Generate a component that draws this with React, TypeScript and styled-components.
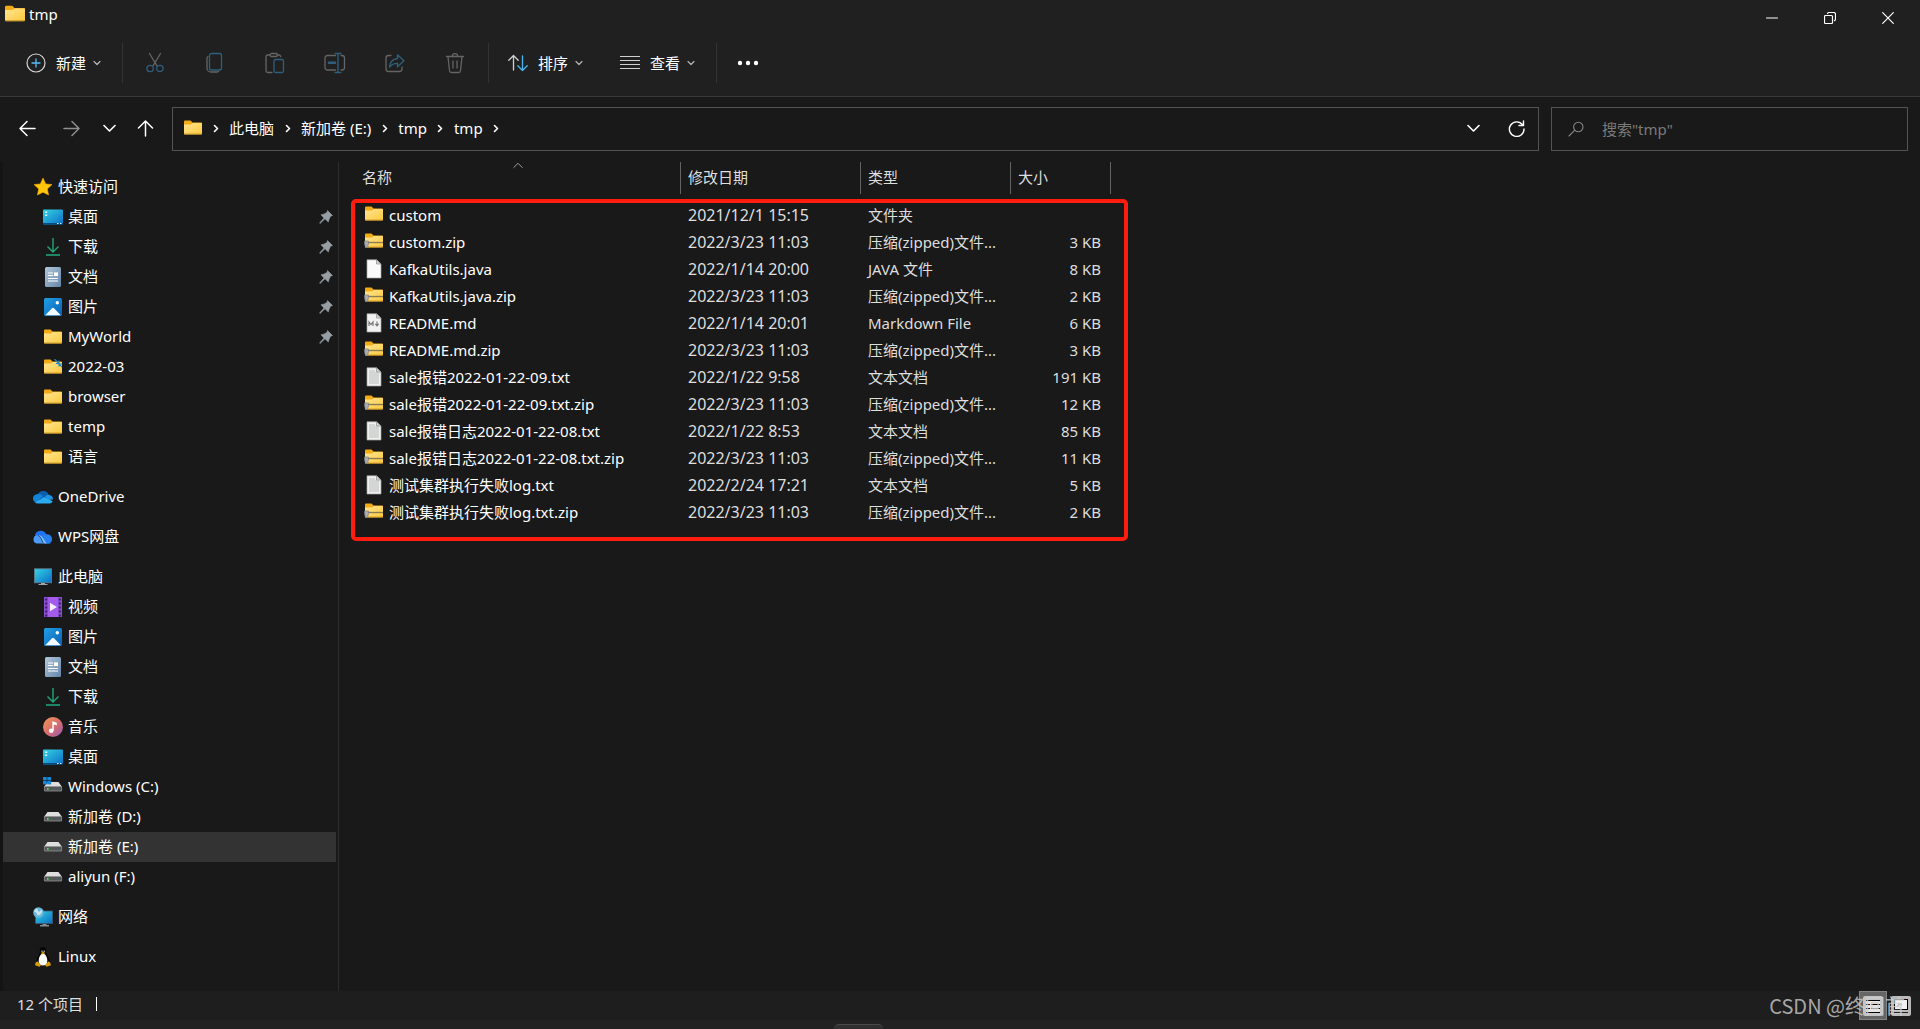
import React from "react";
import styled, { createGlobalStyle } from "styled-components";

const GlobalStyle = createGlobalStyle`
  * { box-sizing: border-box; }
  body {
    margin: 0;
    background: #191919;
    color: #ffffff;
    font-family: "Noto Sans", "Noto Sans CJK SC", sans-serif;
    font-size: 15px;
    line-height: 20px;
  }
  button, input { font: inherit; color: inherit; }
`;

const Window = styled.div`
  display: flex;
  flex-direction: column;
  min-height: 100vh;
`;

const PlainButton = styled.button`
  display: inline-flex;
  align-items: center;
  justify-content: center;
  padding: 0;
  border: 0;
  background: transparent;
  white-space: nowrap;
`;

/* ---------- title bar and toolbar ---------- */

const Header = styled.header`
  background: #202020;
  border-bottom: 1px solid #393939;
`;

const TitleBar = styled.div`
  display: flex;
  justify-content: space-between;
  height: 36px;
  padding: 0 3px 0 5px;
`;

const Title = styled.h1`
  display: flex;
  align-items: center;
  gap: 4px;
  height: 28px;
  margin: 0;
  font-size: 15px;
  font-weight: 400;
`;

const WindowControls = styled.div`
  display: flex;
`;

const WindowButton = styled(PlainButton)`
  width: 58px;
  height: 36px;
`;

const Toolbar = styled.div`
  display: flex;
  align-items: center;
  height: 60px;
  padding: 0 0 6px 16px;
`;

const MenuButton = styled(PlainButton)`
  height: 40px;
  padding: 0 10px;
`;

const MenuLabel = styled.span`
  margin: 0 7px 0 10px;
`;

const IconButton = styled(PlainButton)`
  width: 60px;
  height: 40px;
`;

const MoreButton = styled(PlainButton)`
  width: 62px;
  height: 40px;
`;

const Separator = styled.span<{ $before: number; $after: number }>`
  width: 1px;
  height: 40px;
  margin-left: ${(p) => p.$before}px;
  margin-right: ${(p) => p.$after}px;
  background: #333333;
`;

const MenuGroup = styled.div`
  display: flex;
  gap: 17px;
`;

/* ---------- address row ---------- */

const AddressRow = styled.div`
  display: flex;
  align-items: center;
  padding: 10px 12px 11px 5px;
`;

const NavButtons = styled.div`
  display: flex;
  width: 167px;
  padding-bottom: 2px;
`;

const NavButton = styled(PlainButton)<{ $width: number }>`
  width: ${(p) => p.$width}px;
  height: 40px;
`;

const AddressBox = styled.div`
  display: flex;
  flex: 1;
  align-items: center;
  justify-content: space-between;
  height: 44px;
  padding: 0 0 2px 11px;
  border: 1px solid #535353;
`;

const Crumbs = styled.nav`
  display: flex;
  align-items: center;
`;

const Crumb = styled(PlainButton)`
  height: 40px;
`;

const CrumbArrow = styled.span`
  display: inline-flex;
  justify-content: center;
  width: 27px;
`;

const AddressActions = styled.div`
  display: flex;
`;

const AddressAction = styled(PlainButton)`
  width: 43px;
  height: 40px;
`;

const SearchBox = styled.label`
  display: flex;
  align-items: center;
  gap: 17px;
  width: 357px;
  height: 44px;
  margin-left: 12px;
  padding: 0 16px;
  border: 1px solid #535353;
`;

const SearchInput = styled.input`
  flex: 1;
  min-width: 0;
  padding: 0;
  border: 0;
  outline: 0;
  background: transparent;
  &::placeholder { color: #7a7a7a; opacity: 1; }
`;

/* ---------- body ---------- */

const Body = styled.div`
  display: flex;
  flex: 1;
`;

const Sidebar = styled.nav`
  display: flex;
  flex-direction: column;
  gap: 10px;
  width: 339px;
  padding-top: 10px;
  border-left: 3px solid #141414;
  border-right: 1px solid #2d2d2d;
`;

const TreeGroup = styled.ul`
  margin: 0;
  padding: 0;
  list-style: none;
`;

const TreeButton = styled(PlainButton)<{ $nested: boolean; $selected: boolean }>`
  display: flex;
  justify-content: flex-start;
  gap: 5px;
  width: 333px;
  height: 30px;
  padding: 0 3px 0 ${(p) => (p.$nested ? 40 : 30)}px;
  background: ${(p) => (p.$selected ? "#333333" : "transparent")};
`;

const IconSlot = styled.span`
  display: inline-flex;
  flex: none;
  align-items: center;
  justify-content: center;
  width: 20px;
  height: 20px;
`;

const TreeLabel = styled.span`
  flex: 1;
  padding-bottom: 2px;
  text-align: left;
`;

const Main = styled.main`
  flex: 1;
  padding-left: 16px;
`;

const Listing = styled.div`
  position: relative;
  width: 756px;
`;

const FileTable = styled.table`
  width: 756px;
  border-collapse: separate;
  border-spacing: 0;
  table-layout: fixed;
`;

const HeadCell = styled.th<{ $width: number }>`
  position: relative;
  width: ${(p) => p.$width}px;
  height: 32px;
  padding: 0 7px 2px;
  border-right: 1px solid #636363;
  color: #dedede;
  font-weight: 400;
  text-align: left;
`;

const SortMark = styled.span`
  position: absolute;
  top: 0;
  left: 50%;
  display: flex;
  margin-left: -5px;
`;

const Spacer = styled.td`
  height: 8px;
  padding: 0;
`;

const Cell = styled.td<{ $align?: "left" | "right" }>`
  height: 27px;
  padding: 0 ${(p) => (p.$align === "right" ? 10 : 7)}px 2px 7px;
  overflow: hidden;
  color: #dedede;
  text-align: ${(p) => p.$align ?? "left"};
  white-space: nowrap;
`;

const DateCell = styled(Cell)`
  font-size: 16px;
`;

const FileName = styled.span`
  display: flex;
  align-items: center;
  gap: 5px;
  padding-left: 2px;
  color: #ffffff;
`;

const Highlight = styled.div`
  position: absolute;
  top: 37px;
  right: -17px;
  bottom: -15px;
  left: -4px;
  border: 4px solid #ff1d0f;
  border-radius: 5px;
  pointer-events: none;
`;

/* ---------- status bar ---------- */

const StatusBar = styled.footer`
  position: relative;
  display: flex;
  align-items: center;
  justify-content: space-between;
  height: 29px;
  padding: 0 5px 0 17px;
  background: #1e1e1e;
  color: #dedede;
`;

const StatusText = styled.span`
  display: flex;
  align-items: center;
  gap: 13px;
  padding-bottom: 3px;
`;

const StatusRule = styled.span`
  width: 1px;
  height: 14px;
  background: #ffffff;
`;

const ViewButtons = styled.div`
  display: flex;
`;

const ViewButton = styled(PlainButton)<{ $active: boolean }>`
  width: 28px;
  height: 29px;
  border: 1px solid ${(p) => (p.$active ? "#838383" : "transparent")};
  background: ${(p) => (p.$active ? "#666666" : "transparent")};
`;

const Watermark = styled.span`
  position: absolute;
  right: 15px;
  bottom: 0;
  color: rgba(205, 205, 205, 0.8);
  font-family: "Noto Sans CJK SC", sans-serif;
  font-size: 20px;
  line-height: 28px;
  pointer-events: none;
`;

const BottomEdge = styled.div`
  display: flex;
  align-items: flex-end;
  justify-content: center;
  height: 9px;
  padding-right: 203px;
  background: #222222;
`;

const EdgeTab = styled.span`
  width: 49px;
  height: 5px;
  border-top: 1px solid #4a4a4a;
  border-radius: 5px 5px 0 0;
  background: #303030;
`;

/* ---------- icons ---------- */

type Line = { d: string; w: number; h: number; color?: string; weight?: number };
const Stroke = ({ d, w, h, color = "#ffffff", weight = 1 }: Line) => (
  <svg width={w} height={h} viewBox={`0 0 ${w} ${h}`} fill="none" stroke={color} strokeWidth={weight} strokeLinecap="round" strokeLinejoin="round" aria-hidden="true">
    <path d={d} />
  </svg>
);

const SmallChevron = () => <Stroke d="M1 1.5 4 4.5 7 1.5" w={8} h={6} color="#b5b5b5" weight={1.2} />;
const Chevron = () => <Stroke d="M1 1.5 6.500 7 12 1.500" w={13} h={9} weight={1.6} />;
const RightChevron = () => <Stroke d="M1.500 1.500 4.500 4.500 1.500 7.500" w={6} h={9} weight={1.6} />;

const GRAY = "#646464";
const TEAL = "#2e5f7c";

const Tool = ({ gray, teal }: { gray: string; teal?: string }) => (
  <svg width="22" height="22" viewBox="0 0 22 22" fill="none" strokeWidth="1.3" strokeLinecap="round" strokeLinejoin="round" aria-hidden="true">
    <path d={gray} stroke={GRAY} />
    {teal && <path d={teal} stroke={TEAL} />}
  </svg>
);

const CutIcon = () => <Tool gray="M5.500 1.500 13 13.800M16.500 1.500 9 13.800" teal="M9.300 16.500a3.200 3.200 0 1 1-6.400 0a3.200 3.200 0 0 1 6.400 0zM19.100 16.500a3.200 3.200 0 1 1-6.400 0a3.200 3.200 0 0 1 6.400 0z" />;
const CopyIcon = () => <Tool gray="M4 4.500C3.200 5 3 5.500 3 6.500V16a4 4 0 0 0 4 4h6c1 0 1.600-.3 2-1" teal="M7.500 1.500h8a2 2 0 0 1 2 2v12.500a2 2 0 0 1-2 2h-8a2 2 0 0 1-2-2V3.500a2 2 0 0 1 2-2z" />;
const PasteIcon = () => <Tool gray="M6 3H3.800A1.800 1.800 0 0 0 2 4.800v14A1.800 1.800 0 0 0 3.800 20.500H8M13 3h1.800c1 0 1.700.6 1.900 1.700M7.500 1.500h4.500a1.300 1.300 0 0 1 0 3H7.500a1.300 1.300 0 0 1 0-3z" teal="M11.500 7.500h6.500a1.500 1.500 0 0 1 1.500 1.500v10a1.500 1.500 0 0 1-1.500 1.500h-6.500a1.500 1.500 0 0 1-1.500-1.500V9a1.500 1.500 0 0 1 1.500-1.500z" />;
const RenameIcon = () => (
  <svg width="22" height="22" viewBox="0 0 22 22" fill="none" strokeWidth="1.300" strokeLinecap="round" aria-hidden="true">
    <path d="M11.500 3.500h-8A2.500 2.500 0 0 0 1 6v9.500A2.500 2.500 0 0 0 3.500 18h8M17 3.500h1A2.500 2.500 0 0 1 20.500 6v9.500A2.500 2.500 0 0 1 18 18h-1" stroke={GRAY} />
    <path d="M11 1.500h6M14 1.500v19M11 20.500h6" stroke={TEAL} />
    <path d="M5 10.800h6" stroke={TEAL} strokeWidth="2.600" />
  </svg>
);
const ShareIcon = () => <Tool gray="M7 3.500H4.500A2.500 2.500 0 0 0 2 6v11a2.500 2.500 0 0 0 2.500 2.500h11A2.500 2.500 0 0 0 18 17v-2" teal="M13.500 2.800 20 8.800l-6.500 6v-3.500c-3.500 0-6 1-8 3.700.5-5 3.300-8 8-8.500z" />;
const TrashIcon = () => <Tool gray="M2.500 4.500h17M8.300 4.300a2.700 2.700 0 0 1 5.400 0M4 4.500l1.500 14.200a2 2 0 0 0 2 1.800h7a2 2 0 0 0 2-1.800L18 4.500M9 9v7M13 9v7" />;

const NewIcon = () => (
  <svg width="20" height="20" viewBox="0 0 20 20" fill="none" aria-hidden="true">
    <circle cx="10" cy="10" r="9" stroke="#d6d6d6" strokeWidth="1.200" />
    <path d="M10 6v8M6 10h8" stroke="#55bdf5" strokeWidth="1.300" strokeLinecap="round" />
  </svg>
);
const SortIcon = () => (
  <svg width="20" height="18" viewBox="0 0 20 18" fill="none" strokeWidth="1.300" strokeLinecap="round" strokeLinejoin="round" aria-hidden="true">
    <path d="M5.500 16V1.500M.8 6.200 5.500 1.500l4.700 4.700" stroke="#cfcfcf" />
    <path d="M14.500 2v14.500M9.800 11.800l4.700 4.700 4.700-4.700" stroke="#4cb5ee" />
  </svg>
);
const ListIcon = () => (
  <svg width="20" height="14" viewBox="0 0 20 14" aria-hidden="true">
    <path d="M0 .5h20M0 4.500h20M0 8.500h20M0 12.500h20" stroke="#d0d0d0" />
  </svg>
);
const DotsIcon = () => (
  <svg width="22" height="6" viewBox="0 0 22 6" fill="#fff" aria-hidden="true">
    <circle cx="3" cy="3" r="2.200" /><circle cx="11" cy="3" r="2.200" /><circle cx="19" cy="3" r="2.200" />
  </svg>
);

const FolderIcon = ({ large = false, shortcut = false }: { large?: boolean; shortcut?: boolean }) => (
  <svg width={large ? 20 : 18} height={large ? 18 : 17} viewBox={large ? "0 0 18 16" : "0 0 18 17"} aria-hidden="true">
    <defs>
      <linearGradient id="folderFront" x1="0" y1="0" x2="1" y2="1">
        <stop offset="0" stopColor="#ffe594" /><stop offset="1" stopColor="#fdc93c" />
      </linearGradient>
    </defs>
    <path d="M0 1.500A1 1 0 0 1 1 .5h5.500L8.500 2.500H17a1 1 0 0 1 1 1V13H0z" fill="#f3ab17" />
    <path d="M0 4.500h7L8.800 3H18v10.500a1 1 0 0 1-1 1H1a1 1 0 0 1-1-1z" fill="url(#folderFront)" />
    <path d="M0 14h18" stroke="#c99320" strokeWidth=".8" />
    {shortcut && <path d="M10.500 0 15 4.500M15 1.500v3h-3M18 8l-3-3M15 7.500V5h3" stroke="#1686c8" strokeWidth="1.100" fill="none" />}
  </svg>
);
const ZipIcon = () => (
  <svg width="20" height="17" viewBox="0 0 20 17" aria-hidden="true">
    <path d="M1 1.500a1 1 0 0 1 1-1h5.500l2 2H18a1 1 0 0 1 1 1V13H1z" fill="#f3ab17" />
    <path d="M1 4.500h7L9.800 3H19v10.500a1 1 0 0 1-1 1H2a1 1 0 0 1-1-1z" fill="url(#folderFront)" />
    <path d="M1 14h18" stroke="#c99320" strokeWidth=".8" />
    <path d="M4 9.500h15" stroke="#8b7b54" strokeWidth="1.400" />
    <path d="M5 8.500h14" stroke="#d8cba4" strokeWidth=".8" strokeDasharray="1 1" />
    <path d="M.5 8h4v3l-1 3.500h-2L.5 11z" fill="#a8abb0" stroke="#777b82" strokeWidth=".6" />
  </svg>
);
const Page = ({ children, fill = "#fafafa" }: { children?: React.ReactNode; fill?: string }) => (
  <svg width="16" height="20" viewBox="0 0 16 20" aria-hidden="true">
    <path d="M1 .8h9.500L15 5v14H1z" fill={fill} stroke="#a5a5a5" strokeWidth=".7" />
    <path d="M10.500.8V5H15z" fill="#d5d5d5" stroke="#8e8e8e" strokeWidth=".7" />
    {children}
  </svg>
);
const JavaIcon = () => <Page />;
const MarkdownIcon = () => (
  <Page fill="#f2f2f2">
    <path d="M3 13V9l2 2.500L7 9v4M11 8.500v4M9.300 10.800 11 12.800l1.700-2" fill="none" stroke="#777" strokeWidth="1.200" />
  </Page>
);
const TextIcon = () => (
  <Page fill="#f0f0ef">
    <path d="M3 4h6M3 6h10M3 8h10M3 10h10M3 12h10M3 14h10M3 16h10" stroke="#a9adb0" strokeWidth=".8" />
  </Page>
);

const StarIcon = () => (
  <svg width="20" height="20" viewBox="0 0 20 20" aria-hidden="true">
    <path d="m10 1 2.700 5.900 6.300.7-4.700 4.300L15.600 18 10 15.200 4.400 18l1.300-6.100L1 7.600l6.300-.7z" fill="#ffc60a" stroke="#f5a800" strokeWidth=".6" strokeLinejoin="round" />
  </svg>
);
const DesktopIcon = () => (
  <svg width="20" height="16" viewBox="0 0 20 16" aria-hidden="true">
    <defs>
      <linearGradient id="screen" x1="0" y1="0" x2="1" y2="1">
        <stop offset="0" stopColor="#34d3e4" /><stop offset="1" stopColor="#0c6fc6" />
      </linearGradient>
    </defs>
    <rect y=".5" width="20" height="15" rx="1" fill="url(#screen)" />
    <path d="M0 14h20v.5a1 1 0 0 1-1 1H1a1 1 0 0 1-1-1z" fill="#074a82" />
    <path d="M2.200 2.500h2v1.500h-2zM2.200 5.500h2V7h-2zM14 14h1.500v1H14zM17 14h1.500v1H17z" fill="#e9fbff" />
  </svg>
);
const DownloadIcon = () => (
  <svg width="16" height="20" viewBox="0 0 16 20" fill="none" aria-hidden="true">
    <path d="M8 1v13M2.500 9.500 8 15l5.500-5.500" stroke="#22a578" strokeWidth="1.400" />
    <path d="M1 18h14" stroke="#1f9470" strokeWidth="1.800" />
  </svg>
);
const DocumentIcon = () => (
  <svg width="16" height="20" viewBox="0 0 16 20" aria-hidden="true">
    <defs>
      <linearGradient id="paper" x1="0" y1="0" x2="1" y2="1">
        <stop offset="0" stopColor="#b3c8dc" /><stop offset="1" stopColor="#6485a8" />
      </linearGradient>
    </defs>
    <rect width="16" height="20" rx="1.500" fill="url(#paper)" />
    <path d="M3 6h5M3 8.500h5M3 11.500h10M3 14h10" stroke="#fff" strokeWidth="1.200" />
    <path d="M9 5.400h4v3.700H9z" fill="#fff" />
  </svg>
);
const PictureIcon = () => (
  <svg width="18" height="18" viewBox="0 0 18 18" aria-hidden="true">
    <defs>
      <linearGradient id="sky" x1="0" y1="0" x2="1" y2="1">
        <stop offset="0" stopColor="#1fa0e5" /><stop offset="1" stopColor="#0c5fb4" />
      </linearGradient>
    </defs>
    <rect width="18" height="18" rx="1.500" fill="url(#sky)" />
    <path d="M1.200 17.200 8 10.200a1.400 1.400 0 0 1 2 0l6.800 7z" fill="#f3f9ff" />
    <circle cx="13.300" cy="4.700" r="1.700" fill="#fff" />
  </svg>
);
const VideoIcon = () => (
  <svg width="18" height="20" viewBox="0 0 18 20" aria-hidden="true">
    <rect width="18" height="20" rx="1.500" fill="#a25bea" />
    <path d="M0 0h4v20H0zM14 0h4v20h-4z" fill="#8a4bd6" />
    <path d="M2.200 1.500v18M15.800 1.500v18" stroke="#3a1f5e" strokeWidth="2" strokeDasharray="2 2" />
    <path d="M6 5.800 13 10l-7 4.200z" fill="#f4eeff" />
  </svg>
);
const MusicIcon = () => (
  <svg width="20" height="20" viewBox="0 0 20 20" aria-hidden="true">
    <defs>
      <linearGradient id="disc" x1="0" y1="0" x2="1" y2="1">
        <stop offset="0" stopColor="#f29a55" /><stop offset=".5" stopColor="#d9706c" /><stop offset="1" stopColor="#9558b8" />
      </linearGradient>
    </defs>
    <circle cx="10" cy="10" r="10" fill="url(#disc)" />
    <circle cx="8.200" cy="13.700" r="2.300" fill="#fff" />
    <path d="M9.300 13.700V4.200l4.500 1.500v2.600l-3-.9v6.300z" fill="#fff" />
  </svg>
);
const OneDriveIcon = () => (
  <svg width="20" height="14" viewBox="0 0 20 14" aria-hidden="true">
    <path d="M4.500 4.800a6 6 0 0 1 11.300.2L12 9 4 8z" fill="#0a5fb0" />
    <path d="M4.500 4.200c2.200-.4 4 .6 5.500 1.800L4 12.800A4.300 4.300 0 0 1 4.500 4.200z" fill="#1183d8" />
    <path d="M12 6.500c1.500-1.800 3-2 4.500-1.500a4.400 4.400 0 0 1 3.500 4.500L14 10z" fill="#1d93df" />
    <path d="M2 12.500 11 7l8.700 4.200A3.500 3.500 0 0 1 16.500 13.500h-12A4.500 4.500 0 0 1 2 12.500z" fill="#2aabf0" />
  </svg>
);
const WpsIcon = () => (
  <svg width="20" height="14" viewBox="0 0 20 14" aria-hidden="true">
    <path d="M2 5a6 6 0 0 1 11-1.200l4.500 9.700H12z" fill="#1d72f3" />
    <path d="M.5 9.500a4.500 4.500 0 0 1 4-4.500c2 0 3.500 3 6.500 8.500H4.500A4 4 0 0 1 .5 9.500z" fill="#4a9bf7" />
    <path d="M5.500 5c3-.2 5.500 4 8.500 8.500h-4C8.500 10.500 7 7 5.500 5z" fill="#7dbcfb" />
    <path d="M4.800 5.200C7.500 6 8.500 10 10.500 13.500" fill="none" stroke="#12386f" strokeWidth=".9" />
    <path d="M11.500 4.800A5 5 0 0 1 19 9a4.400 4.400 0 0 1-3.500 4.500H14C11.500 11 11 8.500 9 5z" fill="#287fef" />
  </svg>
);
const PcIcon = () => (
  <svg width="18" height="18" viewBox="0 0 18 18" aria-hidden="true">
    <rect x=".4" y=".8" width="17.200" height="14" fill="url(#screen)" stroke="#647b8a" strokeWidth=".8" />
    <path d="M7 15h4v1h2.500v1H4.500v-1H7z" fill="#9ea6ad" />
  </svg>
);
const NetworkIcon = () => (
  <svg width="20" height="20" viewBox="0 0 20 20" aria-hidden="true">
    <rect x="2.500" y="4" width="17" height="12.500" fill="url(#screen)" stroke="#395b72" strokeWidth=".8" />
    <path d="M9.500 17h4v1h2.500v1.500H7V18h2.500z" fill="#858c92" />
    <circle cx="5.500" cy="5.500" r="5.300" fill="#6bb5d8" />
    <path d="M3 1.500c3 .5 1 2 2.500 3S8 2 9 3c.5 3-1 5-4 5.500C3.500 7 4 5.500 1 4.500z" fill="#c7e3ee" />
  </svg>
);
const DriveIcon = ({ system = false }: { system?: boolean }) => (
  <svg width="20" height="20" viewBox="0 0 20 20" aria-hidden="true">
    <path d="M4.500 5h11l3.500 5H1z" fill="#dedede" />
    <path d="M1.400 9.500h17.200V14H1.400z" fill="#55585a" stroke="#929292" strokeWidth=".8" />
    <rect x="4" y="11" width="1.600" height="1.800" fill="#4be34b" />
    {system && <path d="M0 0h3.700v3.300H0zM4.300 0H8v3.300H4.300zM0 3.900h3.700v3.300H0zM4.300 3.900H8v3.300H4.300z" fill="#168be0" stroke="#16689e" strokeWidth=".3" />}
  </svg>
);
const LinuxIcon = () => (
  <svg width="16" height="20" viewBox="0 0 16 20" aria-hidden="true">
    <path d="M8 0c3 0 3.200 2.500 3.200 5 0 3 3.300 5 3.300 9.500 0 3-2 4.500-6.500 4.500s-6.500-1.500-6.500-4.500C1.500 10 4.800 8 4.800 5 4.800 2.500 5 0 8 0z" fill="#050505" />
    <path d="M8 6.500c2.500 0 4.300 4 4.300 7.500 0 3-1.600 4.500-4.300 4.500S3.700 17 3.700 14C3.700 10.500 5.500 6.500 8 6.500z" fill="#fff" />
    <path d="M6.500 3.500h1v1.500h-1zM8.700 3.500h1v1.500h-1z" fill="#ddd" />
    <path d="M5.700 6 8 4.800 10.300 6 8 7.500zM2.500 14.200l3.500 4-1.500 1.600L0 18.300l.5-2.500zM13.500 14.200l-3.500 4 1.500 1.600 4.500-1.500-.8-2.500z" fill="#d99c0b" />
  </svg>
);
const PinIcon = () => (
  <svg width="14" height="14" viewBox="0 0 14 14" aria-hidden="true">
    <path d="M8.500.5 13.500 5.500 11.500 6.300 10 9.500 9.300 12 6 8.800 1 13.500.5 13 5 8 2 4.800 4.700 4.200 8 2.500z" fill="#979ea4" stroke="#979ea4" strokeWidth=".6" strokeLinejoin="round" />
  </svg>
);
const SearchIcon = () => <Stroke d="M6.300 9.700 1 15M15 6a4.700 4.700 0 1 1-9.400 0A4.700 4.700 0 0 1 15 6z" w={17} h={16} color="#858585" weight={1.1} />;
const DetailsIcon = () => (
  <svg width="20" height="20" viewBox="0 0 20 20" aria-hidden="true">
    <rect width="20" height="20" rx="2" fill="#c4c4c4" />
    <rect x="3" y="4" width="14" height="13" fill="#e6e6e6" />
    <path d="M3 4.500h14M3 8.500h4M8 8.500h9M3 12.500h4M8 12.500h9M3 16.500h14" stroke="#000" strokeWidth="1" />
  </svg>
);
const ThumbsIcon = () => (
  <svg width="20" height="20" viewBox="0 0 20 20" aria-hidden="true">
    <rect width="20" height="20" rx="2" fill="#b9b9b9" />
    <rect x="3.500" y="3.500" width="13" height="10" fill="#f2f2f2" stroke="#000" />
    <path d="M6 10.500 9 7.500l2 1.500" stroke="#888" fill="none" />
    <path d="M3 16.500h14" stroke="#222" />
  </svg>
);

/* ---------- data ---------- */

type Node = { label: string; icon: React.ReactNode; nested?: boolean; pinned?: boolean; selected?: boolean };

const tree: Node[][] = [
  [
    { label: "快速访问", icon: <StarIcon /> },
    { label: "桌面", icon: <DesktopIcon />, nested: true, pinned: true },
    { label: "下载", icon: <DownloadIcon />, nested: true, pinned: true },
    { label: "文档", icon: <DocumentIcon />, nested: true, pinned: true },
    { label: "图片", icon: <PictureIcon />, nested: true, pinned: true },
    { label: "MyWorld", icon: <FolderIcon />, nested: true, pinned: true },
    { label: "2022-03", icon: <FolderIcon shortcut />, nested: true },
    { label: "browser", icon: <FolderIcon />, nested: true },
    { label: "temp", icon: <FolderIcon />, nested: true },
    { label: "语言", icon: <FolderIcon />, nested: true },
  ],
  [{ label: "OneDrive", icon: <OneDriveIcon /> }],
  [{ label: "WPS网盘", icon: <WpsIcon /> }],
  [
    { label: "此电脑", icon: <PcIcon /> },
    { label: "视频", icon: <VideoIcon />, nested: true },
    { label: "图片", icon: <PictureIcon />, nested: true },
    { label: "文档", icon: <DocumentIcon />, nested: true },
    { label: "下载", icon: <DownloadIcon />, nested: true },
    { label: "音乐", icon: <MusicIcon />, nested: true },
    { label: "桌面", icon: <DesktopIcon />, nested: true },
    { label: "Windows (C:)", icon: <DriveIcon system />, nested: true },
    { label: "新加卷 (D:)", icon: <DriveIcon />, nested: true },
    { label: "新加卷 (E:)", icon: <DriveIcon />, nested: true, selected: true },
    { label: "aliyun (F:)", icon: <DriveIcon />, nested: true },
  ],
  [{ label: "网络", icon: <NetworkIcon /> }],
  [{ label: "Linux", icon: <LinuxIcon /> }],
];

const kinds = {
  folder: { icon: <FolderIcon />, text: "文件夹" },
  zip: { icon: <ZipIcon />, text: "压缩(zipped)文件..." },
  java: { icon: <JavaIcon />, text: "JAVA 文件" },
  md: { icon: <MarkdownIcon />, text: "Markdown File" },
  txt: { icon: <TextIcon />, text: "文本文档" },
};

const files: [string, string, keyof typeof kinds, string][] = [
  ["custom", "2021/12/1 15:15", "folder", ""],
  ["custom.zip", "2022/3/23 11:03", "zip", "3 KB"],
  ["KafkaUtils.java", "2022/1/14 20:00", "java", "8 KB"],
  ["KafkaUtils.java.zip", "2022/3/23 11:03", "zip", "2 KB"],
  ["README.md", "2022/1/14 20:01", "md", "6 KB"],
  ["README.md.zip", "2022/3/23 11:03", "zip", "3 KB"],
  ["sale报错2022-01-22-09.txt", "2022/1/22 9:58", "txt", "191 KB"],
  ["sale报错2022-01-22-09.txt.zip", "2022/3/23 11:03", "zip", "12 KB"],
  ["sale报错日志2022-01-22-08.txt", "2022/1/22 8:53", "txt", "85 KB"],
  ["sale报错日志2022-01-22-08.txt.zip", "2022/3/23 11:03", "zip", "11 KB"],
  ["测试集群执行失败log.txt", "2022/2/24 17:21", "txt", "5 KB"],
  ["测试集群执行失败log.txt.zip", "2022/3/23 11:03", "zip", "2 KB"],
];

const tools: [string, React.ReactNode][] = [
  ["剪切", <CutIcon />],
  ["复制", <CopyIcon />],
  ["粘贴", <PasteIcon />],
  ["重命名", <RenameIcon />],
  ["共享", <ShareIcon />],
  ["删除", <TrashIcon />],
];

const crumbs = ["此电脑", "新加卷 (E:)", "tmp", "tmp"];

export default function App() {
  return (
    <Window>
      <GlobalStyle />
      <Header>
        <TitleBar>
          <Title><FolderIcon large />tmp</Title>
          <WindowControls>
            <WindowButton aria-label="最小化"><Stroke d="M.5 1h11" w={12} h={3} /></WindowButton>
            <WindowButton aria-label="还原"><Stroke d="M1.500 3.500h6a1 1 0 0 1 1 1v6a1 1 0 0 1-1 1h-6a1 1 0 0 1-1-1v-6a1 1 0 0 1 1-1zM3.500 1.500C4 .7 4.500.5 5 .5h4.500a2 2 0 0 1 2 2V7c0 .8-.3 1.300-1 1.700" w={12} h={12} weight={1.2} /></WindowButton>
            <WindowButton aria-label="关闭"><Stroke d="M.7.7 11.300 11.300M11.300.7.7 11.300" w={12} h={12} weight={1.2} /></WindowButton>
          </WindowControls>
        </TitleBar>
        <Toolbar>
          <MenuButton><NewIcon /><MenuLabel>新建</MenuLabel><SmallChevron /></MenuButton>
          <Separator $before={11} $after={2} />
          {tools.map(([name, icon]) => (
            <IconButton key={name} aria-label={name} disabled>{icon}</IconButton>
          ))}
          <Separator $before={3} $after={9} />
          <MenuGroup>
            <MenuButton><SortIcon /><MenuLabel>排序</MenuLabel><SmallChevron /></MenuButton>
            <MenuButton><ListIcon /><MenuLabel>查看</MenuLabel><SmallChevron /></MenuButton>
          </MenuGroup>
          <Separator $before={11} $after={0} />
          <MoreButton aria-label="更多"><DotsIcon /></MoreButton>
        </Toolbar>
      </Header>

      <AddressRow>
        <NavButtons>
          <NavButton $width={44} aria-label="后退"><Stroke d="M16 8.500H1M8 1.500l-7 7 7 7" w={17} h={17} weight={1.5} /></NavButton>
          <NavButton $width={44} aria-label="前进"><Stroke d="M1 8.500h15M9 1.500l7 7-7 7" w={17} h={17} color="#8f8f8f" weight={1.5} /></NavButton>
          <NavButton $width={32} aria-label="最近位置"><Chevron /></NavButton>
          <NavButton $width={40} aria-label="向上"><Stroke d="M8.500 16V1M1.500 8l7-7 7 7" w={17} h={17} weight={1.5} /></NavButton>
        </NavButtons>
        <AddressBox>
          <Crumbs aria-label="路径">
            <FolderIcon />
            <CrumbArrow><RightChevron /></CrumbArrow>
            {crumbs.map((name, i) => (
              <React.Fragment key={i}>
                <Crumb>{name}</Crumb>
                <CrumbArrow><RightChevron /></CrumbArrow>
              </React.Fragment>
            ))}
          </Crumbs>
          <AddressActions>
            <AddressAction aria-label="历史记录"><Chevron /></AddressAction>
            <AddressAction aria-label="刷新"><Stroke d="M14.500 4.700A7.300 7.300 0 1 0 16 9M15.500 1v4.500H11" w={17} h={17} weight={1.4} /></AddressAction>
          </AddressActions>
        </AddressBox>
        <SearchBox>
          <SearchIcon />
          <SearchInput type="text" aria-label="搜索" placeholder={'搜索"tmp"'} />
        </SearchBox>
      </AddressRow>

      <Body>
        <Sidebar aria-label="导航窗格">
          {tree.map((group, g) => (
            <TreeGroup key={g}>
              {group.map((node) => (
                <li key={node.label}>
                  <TreeButton $nested={!!node.nested} $selected={!!node.selected}>
                    <IconSlot>{node.icon}</IconSlot>
                    <TreeLabel>{node.label}</TreeLabel>
                    {node.pinned && <PinIcon />}
                  </TreeButton>
                </li>
              ))}
            </TreeGroup>
          ))}
        </Sidebar>
        <Main>
          <Listing>
            <FileTable>
              <thead>
                <tr>
                  <HeadCell $width={326}>
                    名称
                    <SortMark><Stroke d="M.8 5.500 5 1.300l4.200 4.200" w={10} h={7} color="#a0a0a0" /></SortMark>
                  </HeadCell>
                  <HeadCell $width={180}>修改日期</HeadCell>
                  <HeadCell $width={150}>类型</HeadCell>
                  <HeadCell $width={100}>大小</HeadCell>
                </tr>
              </thead>
              <tbody>
                <tr aria-hidden="true"><Spacer colSpan={4} /></tr>
                {files.map(([name, date, kind, size]) => (
                  <tr key={name}>
                    <Cell><FileName><IconSlot>{kinds[kind].icon}</IconSlot>{name}</FileName></Cell>
                    <DateCell>{date}</DateCell>
                    <Cell>{kinds[kind].text}</Cell>
                    <Cell $align="right">{size}</Cell>
                  </tr>
                ))}
              </tbody>
            </FileTable>
            <Highlight />
          </Listing>
        </Main>
      </Body>

      <StatusBar>
        <StatusText>12 个项目<StatusRule /></StatusText>
        <ViewButtons>
          <ViewButton $active aria-label="详细信息"><DetailsIcon /></ViewButton>
          <ViewButton $active={false} aria-label="大图标"><ThumbsIcon /></ViewButton>
        </ViewButtons>
        <Watermark>CSDN @终回首</Watermark>
      </StatusBar>
      <BottomEdge><EdgeTab /></BottomEdge>
    </Window>
  );
}
